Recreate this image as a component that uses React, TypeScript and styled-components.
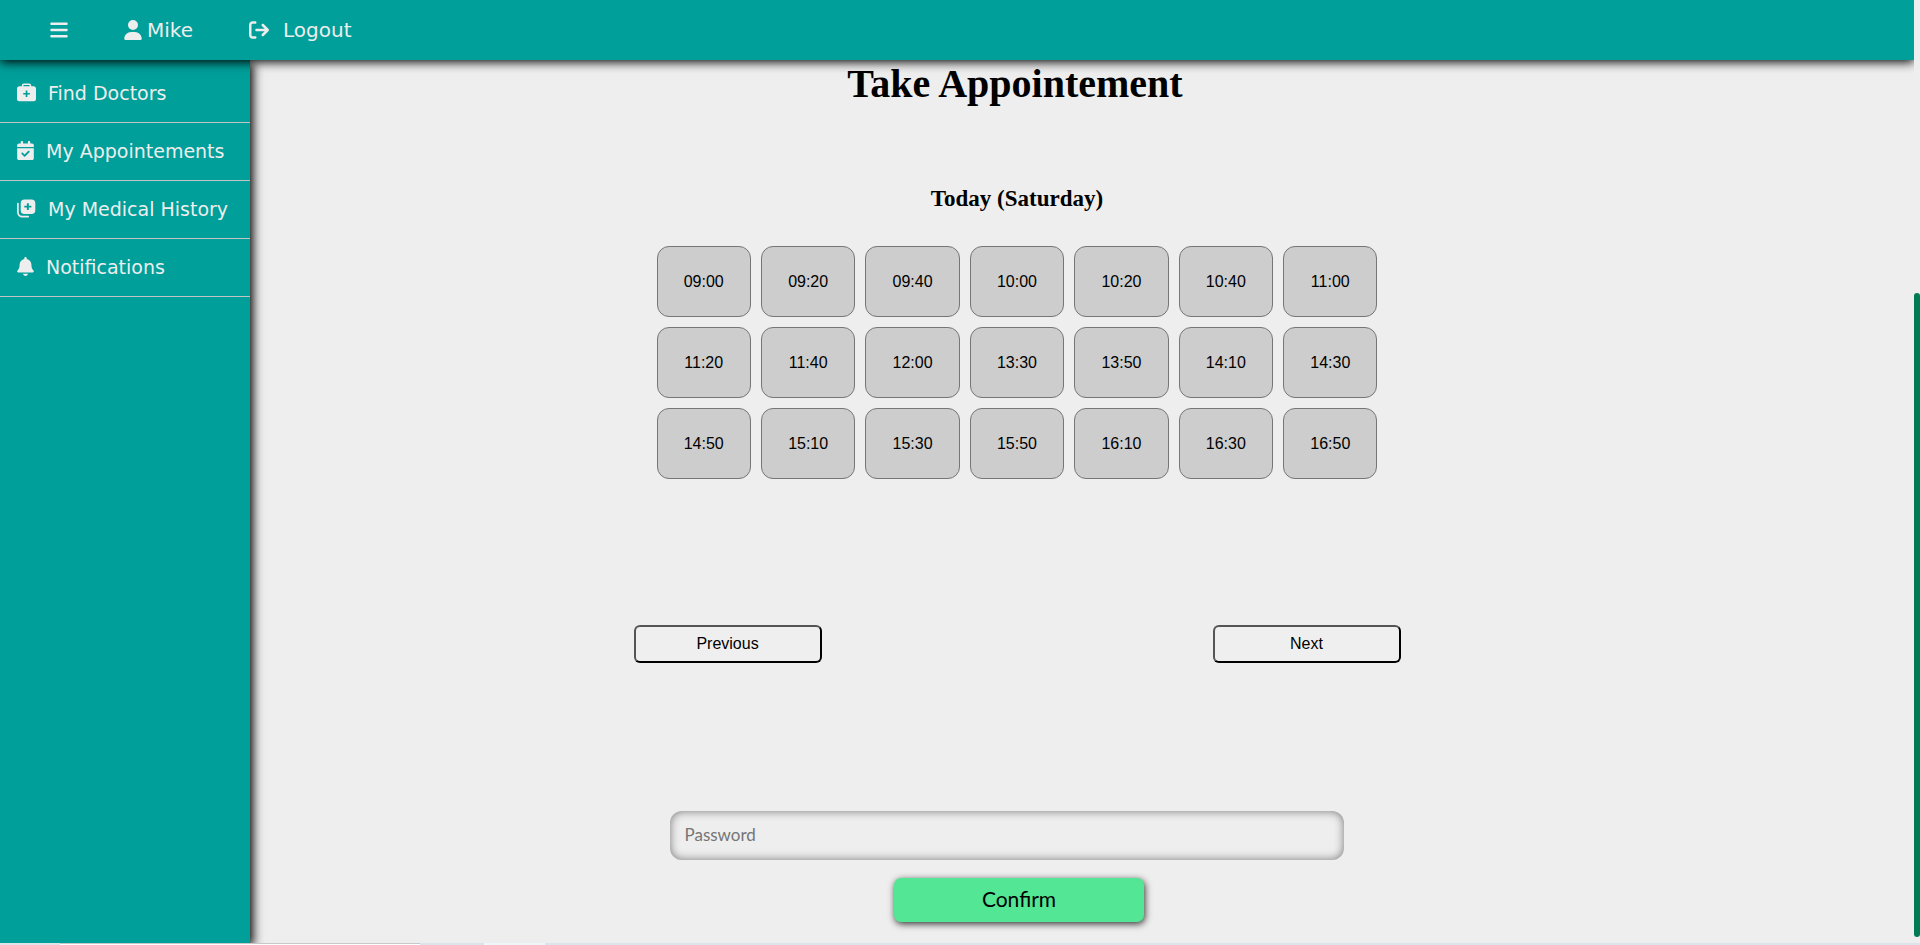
import React, { useState } from "react";
import styled, { createGlobalStyle } from "styled-components";
import { FaArrowRightFromBracket, FaBars, FaBell, FaCalendarCheck, FaUser } from "react-icons/fa6";

const GlobalStyle = createGlobalStyle`
  *, *::before, *::after { box-sizing: border-box; }
  body { margin: 0; background: #eeeeee; color: #000; font-family: "Liberation Serif", serif; }
`;

const uiFont = `"DejaVu Sans", sans-serif`;

const Page = styled.div`
  display: flex;
  flex-direction: column;
  height: 100vh;
  overflow: hidden;
`;

const Window = styled.div`
  display: flex;
  flex: 1;
  min-height: 0;
`;

const View = styled.div`
  display: flex;
  flex-direction: column;
  flex: 1;
  min-width: 0;
  overflow: hidden;
`;

const Header = styled.header`
  position: relative;
  z-index: 2;
  display: flex;
  align-items: center;
  gap: 56px;
  height: 60px;
  flex-shrink: 0;
  padding: 0 50px;
  background: #009f9a;
  box-shadow: 0 2px 10px #000;
`;

const HeaderButton = styled.button<{ $gap?: number; $icon: number }>`
  display: flex;
  align-items: center;
  gap: ${(p) => p.$gap ?? 0}px;
  padding: 0;
  border: 0;
  background: none;
  color: #eeeeee;
  font: 20px ${uiFont};
  cursor: pointer;

  svg { width: ${(p) => p.$icon}px; height: 20px; }
`;

const Body = styled.div`
  display: flex;
  flex: 1;
  min-height: 0;
`;

const Sidebar = styled.nav`
  position: relative;
  z-index: 1;
  width: 250px;
  flex-shrink: 0;
  padding-top: 5px;
  background: #009f9a;
  box-shadow: 3px 3px 10px #000;
`;

const SideLink = styled.a<{ $icon: number }>`
  display: flex;
  align-items: center;
  gap: 12px;
  height: 58px;
  padding: 0 0 2px 17px;
  border-bottom: 1px solid #c4c4c4;
  color: #eeeeee;
  font: 19px ${uiFont};
  text-decoration: none;
  white-space: nowrap;

  svg { width: ${(p) => p.$icon}px; height: 19px; }
`;

const Main = styled.main`
  display: flex;
  flex-direction: column;
  align-items: center;
  flex: 1;
  min-width: 0;
  padding-right: 130px;
`;

const Title = styled.h1`
  margin: 0 4px 0 0;
  font-size: 40px;
  line-height: 48px;
`;

const Day = styled.h2`
  margin: 78px 0 34px;
  font-size: 23px;
  line-height: 26px;
`;

const Slots = styled.div`
  display: grid;
  grid-template-columns: repeat(7, 1fr);
  gap: 10px;
  width: 47%;
`;

const Slot = styled.button`
  height: 71px;
  padding: 0;
  border: 1px solid #767676;
  border-radius: 12px;
  background: #cdcdcd;
  color: #000;
  font: 16px "Liberation Sans", sans-serif;
  cursor: pointer;
`;

const Pager = styled.div`
  display: flex;
  justify-content: space-between;
  width: 50%;
  margin: 146px 0 148px;
`;

const PagerButton = styled.button`
  width: 188px;
  height: 38px;
  border: 2px outset #000;
  border-radius: 6px;
  background: #efefef;
  color: #000;
  font: 16px "Liberation Sans", sans-serif;
  cursor: pointer;
`;

const Form = styled.form`
  display: flex;
  flex-direction: column;
  align-items: center;
  gap: 18px;
  width: 100%;
`;

const Password = styled.input`
  width: 44%;
  height: 49px;
  margin-right: 20px;
  padding: 0 15px 2px;
  border: 0;
  border-radius: 12px;
  background: transparent;
  box-shadow: inset 0 0 10px #777;
  font: 17px Lato, sans-serif;
  &::placeholder { color: #757575; }
`;

const Confirm = styled.button`
  width: 250px;
  height: 44px;
  margin-left: 4px;
  padding: 0 0 3px;
  border: 0;
  border-radius: 7px;
  background: #53e694;
  box-shadow: 1px 2px 7px #333;
  color: #000;
  font: 21px Lato, sans-serif;
  cursor: pointer;
`;

const ScrollTrack = styled.div`
  width: 6px;
  padding: 293px 0 6px;
`;

const ScrollThumb = styled.div`
  height: 100%;
  border-radius: 3px;
  background: #007a52;
`;

const BottomEdge = styled.footer`
  display: flex;
  height: 2px;
  background: #dde3ea;
`;

const EdgeTab = styled.div`
  width: 360px;
  margin-left: 60px;
  border-top: 1px solid #c8c8c8;
  background: #fff;
`;

const EdgeButton = styled.div`
  width: 61px;
  margin-left: 64px;
  background: #f0f5f8;
`;

const MedkitIcon = () => (
  <svg viewBox="0 0 19 19" fill="currentColor" aria-hidden="true">
    <path
      fillRule="evenodd"
      d="M4.8 3.2V2.6A2.1 2.1 0 0 1 6.9.5h5.2a2.1 2.1 0 0 1 2.1 2.1v.6h2.3A2.5 2.5 0 0 1 19 5.7v10A2.5 2.5 0 0 1 16.5 18.2h-14A2.5 2.5 0 0 1 0 15.7v-10A2.5 2.5 0 0 1 2.5 3.2zM6.3 3.2h6.400v-.5a.8.8 0 0 0-.8-.8H7.1a.8.8 0 0 0-.8.8zM8.700 7.500v2.400H6.200v1.700h2.500V14h1.700v-2.400h2.500V9.900h-2.500V7.500z"
    />
  </svg>
);

const HistoryIcon = () => (
  <svg viewBox="0 0 19 19" fill="currentColor" aria-hidden="true">
    <path
      fillRule="evenodd"
      d="M7.5.5H14.5A3.8 3.8 0 0 1 18.300 4.300v6.900A3.800 3.800 0 0 1 14.500 15H7.500A3.800 3.800 0 0 1 3.700 11.200V4.300A3.800 3.800 0 0 1 7.500.5zM9.900 4.300v2.500H7.300v1.800h2.600v2.500h1.900V8.600h2.600V6.800h-2.600V4.300z"
    />
    <path d="M.9 4.500v8.800a4.300 4.300 0 0 0 4.300 4.300h6" fill="none" stroke="currentColor" strokeWidth="1.7" strokeLinecap="round" />
  </svg>
);

const links = [
  { label: "Find Doctors", icon: <MedkitIcon />, iconWidth: 19 },
  { label: "My Appointements", icon: <FaCalendarCheck />, iconWidth: 17 },
  { label: "My Medical History", icon: <HistoryIcon />, iconWidth: 19 },
  { label: "Notifications", icon: <FaBell />, iconWidth: 17 },
];

const times = [
  "09:00", "09:20", "09:40", "10:00", "10:20", "10:40", "11:00",
  "11:20", "11:40", "12:00", "13:30", "13:50", "14:10", "14:30",
  "14:50", "15:10", "15:30", "15:50", "16:10", "16:30", "16:50",
];

export default function App() {
  const [password, setPassword] = useState("");
  return (
    <Page>
      <GlobalStyle />
      <Window>
        <View>
          <Header>
            <HeaderButton $icon={18} aria-label="Menu"><FaBars /></HeaderButton>
            <HeaderButton $icon={18} $gap={5}><FaUser />Mike</HeaderButton>
            <HeaderButton $icon={20} $gap={14}><FaArrowRightFromBracket />Logout</HeaderButton>
          </Header>
          <Body>
            <Sidebar>
              {links.map((l) => (
                <SideLink href="#" key={l.label} $icon={l.iconWidth}>{l.icon}{l.label}</SideLink>
              ))}
            </Sidebar>
            <Main>
              <Title>Take Appointement</Title>
              <Day>Today (Saturday)</Day>
              <Slots>
                {times.map((t) => <Slot type="button" key={t}>{t}</Slot>)}
              </Slots>
              <Pager>
                <PagerButton type="button">Previous</PagerButton>
                <PagerButton type="button">Next</PagerButton>
              </Pager>
              <Form onSubmit={(e) => e.preventDefault()}>
                <Password
                  type="password"
                  aria-label="Password"
                  placeholder="Password"
                  value={password}
                  onChange={(e) => setPassword(e.target.value)}
                />
                <Confirm type="submit">Confirm</Confirm>
              </Form>
            </Main>
          </Body>
        </View>
        <ScrollTrack><ScrollThumb /></ScrollTrack>
      </Window>
      <BottomEdge><EdgeTab /><EdgeButton /></BottomEdge>
    </Page>
  );
}
